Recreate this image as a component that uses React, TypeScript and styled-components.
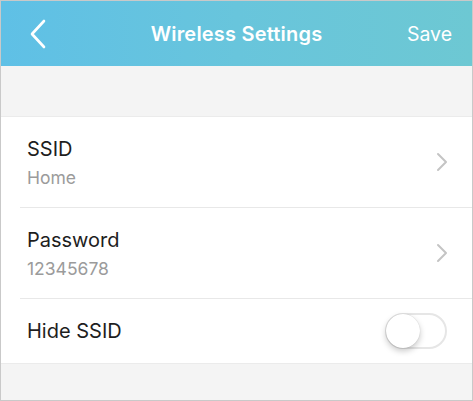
import React from "react";
import styled, { createGlobalStyle } from "styled-components";

const Global = createGlobalStyle`
  html, body { margin: 0; padding: 0; background: #fff; }
  body { font-family: Inter, "Liberation Sans", sans-serif; -webkit-font-smoothing: antialiased; }
`;

const Frame = styled.div`
  width: 473px;
  height: 401px;
  box-sizing: border-box;
  border: 1px solid #c9c9c9;
  background: #f4f4f4;
  display: flex;
  flex-direction: column;
  overflow: hidden;
`;

const Header = styled.header`
  height: 65px;
  flex-shrink: 0;
  background: linear-gradient(90deg, #5fc0e6 0%, #68c5dc 50%, #6dc8d3 100%);
  display: grid;
  grid-template-columns: 80px 1fr 80px;
  align-items: center;
  color: #fff;
`;

const BackButton = styled.button`
  border: none;
  background: none;
  padding: 0 0 0 28px;
  display: flex;
  align-items: center;
  height: 100%;
  cursor: pointer;
`;

const Title = styled.h1`
  margin: 0;
  text-align: center;
  font-size: 20px;
  font-weight: 600;
  letter-spacing: 0.2px;
`;

const SaveButton = styled.button`
  border: none;
  background: none;
  color: #fff;
  font-family: inherit;
  font-size: 19.5px;
  font-weight: 400;
  text-align: right;
  padding: 0 20px 0 0;
  cursor: pointer;
`;

const Spacer = styled.div`
  height: 50px;
  flex-shrink: 0;
`;

const List = styled.div`
  background: #fff;
  border-top: 1px solid #ebebeb;
  border-bottom: 1px solid #ebebeb;
  display: flex;
  flex-direction: column;
`;

const Row = styled.div<{ $h: number; $last?: boolean }>`
  height: ${(p) => p.$h}px;
  margin-left: 19px;
  padding: 0 26px 0 7px;
  display: flex;
  align-items: center;
  justify-content: space-between;
  border-bottom: ${(p) => (p.$last ? "none" : "1px solid #e8e8e8")};
`;

const TextBlock = styled.div`
  display: flex;
  flex-direction: column;
  gap: 6px;
  padding-top: 2px;
`;

const Label = styled.div`
  font-size: 20px;
  color: #1e1e1e;
  line-height: 24px;
`;

const Value = styled.div`
  font-size: 17.5px;
  color: #9b9b9b;
  line-height: 22px;
`;

const Toggle = styled.div`
  width: 62px;
  height: 36px;
  box-sizing: border-box;
  border-radius: 18px;
  border: 2px solid #e6e6e6;
  background: #fff;
  position: relative;
  margin-right: -1px;
`;

const Knob = styled.div`
  position: absolute;
  left: -1px;
  top: -1px;
  width: 34px;
  height: 34px;
  border-radius: 50%;
  background: #fff;
  box-shadow: 0 3px 6px rgba(0, 0, 0, 0.22), 0 0 1px rgba(0, 0, 0, 0.2);
`;

const ChevronWrap = styled.span`
  display: flex;
  margin-right: -2px;
`;

const Chevron = () => (
  <ChevronWrap>
    <svg width="12" height="20" viewBox="0 0 12 20" fill="none">
      <path d="M2 2l8 8-8 8" stroke="#c4c4c4" strokeWidth="2" strokeLinecap="round" strokeLinejoin="round" />
    </svg>
  </ChevronWrap>
);

const BackIcon = () => (
  <svg width="18" height="30" viewBox="0 0 18 30" fill="none">
    <path d="M15 2L3 15l12 13" stroke="#fff" strokeWidth="2.6" strokeLinecap="round" strokeLinejoin="round" />
  </svg>
);

export default function App() {
  return (
    <>
      <Global />
      <Frame>
        <Header>
          <BackButton aria-label="Back">
            <BackIcon />
          </BackButton>
          <Title>Wireless Settings</Title>
          <SaveButton>Save</SaveButton>
        </Header>
        <Spacer />
        <List>
          <Row $h={90}>
            <TextBlock>
              <Label>SSID</Label>
              <Value>Home</Value>
            </TextBlock>
            <Chevron />
          </Row>
          <Row $h={90}>
            <TextBlock>
              <Label>Password</Label>
              <Value>12345678</Value>
            </TextBlock>
            <Chevron />
          </Row>
          <Row $h={64} $last>
            <Label>Hide SSID</Label>
            <Toggle>
              <Knob />
            </Toggle>
          </Row>
        </List>
      </Frame>
    </>
  );
}
